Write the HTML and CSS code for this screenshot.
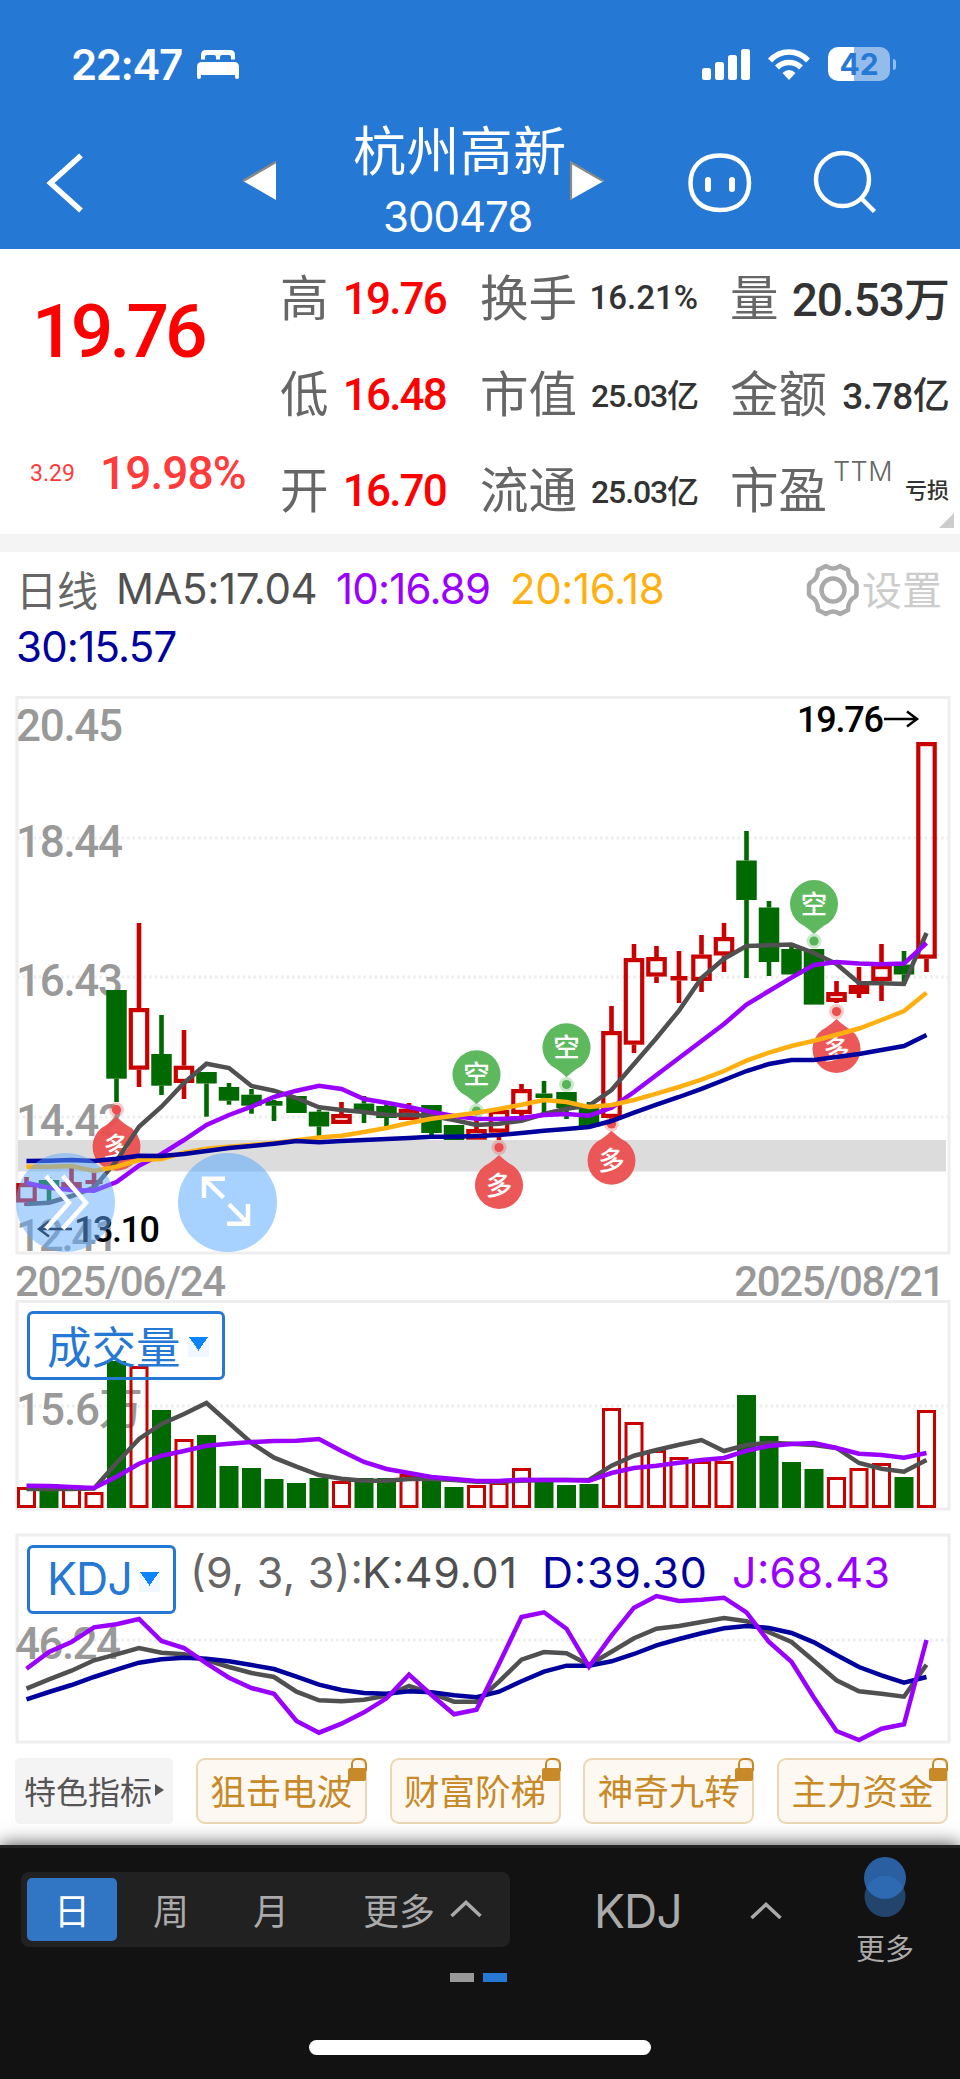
FILE: index.html
```html
<!DOCTYPE html>
<html lang="zh-CN">

<head>
  <meta charset="UTF-8">
  <meta name="viewport" content="width=device-width, initial-scale=1.0">
  <title>杭州高新 300478</title>
  <link rel="stylesheet" href="styles.css">
</head>

<body>
  <header class="header">
    <div class="status-bar">
      <span class="status-time">22:47</span>
      <svg class="icon-bed" width="42" height="29" viewBox="0 0 42 29" fill="#fff">
        <path d="M4 9.500V5q0-5 5-5h24q5 0 5 5v4.500h-4V7q0-2-2-2h-7q-2 0-2 2v2.500h-4V7q0-2-2-2h-7q-2 0-2 2v2.500z" />
        <path d="M0 17q0-5 5-5h32q5 0 5 5v10q0 2-2 2t-2-2v-2H4v2q0 2-2 2t-2-2z" />
      </svg>
      <svg class="icon-signal" width="48" height="31" viewBox="0 0 48 31" fill="#fff">
        <rect x="0" y="19" width="9" height="12" rx="2.500" />
        <rect x="13" y="13" width="9" height="18" rx="2.500" />
        <rect x="26" y="6" width="9" height="25" rx="2.500" />
        <rect x="39" y="0" width="9" height="31" rx="2.500" />
      </svg>
      <svg class="icon-wifi" width="42" height="31" viewBox="0 0 42 31">
        <g fill="none" stroke="#fff" stroke-width="5.500">
          <path d="M2 11.500Q10 3 21 3t19 8.500" />
          <path d="M9 18.500Q14 13.500 21 13.500t12 5" />
        </g>
        <path d="M14.500 24Q21 18 27.500 24L21 31z" fill="#fff" />
      </svg>
      <div class="battery"><span>42</span></div>
    </div>
    <nav class="nav">
      <svg class="nav-back" width="40" height="62" viewBox="45 152 40 62">
        <path d="M81 155.500L50.500 183 81 210.500" fill="none" stroke="#fff" stroke-width="5.500" />
      </svg>
      <svg class="nav-prev" width="36" height="40" viewBox="0 0 36 40">
        <path d="M2 20L35 1v38z" fill="#fff" />
        <path d="M2 20L35 1" stroke="#888" stroke-width="2.500" />
      </svg>
      <div class="nav-title">
        <h1>杭州高新</h1>
        <p>300478</p>
      </div>
      <svg class="nav-next" width="36" height="40" viewBox="0 0 36 40">
        <path d="M1 1l34 19L1 39z" fill="#fff" />
        <path d="M2 39V1.500l32 18.500" fill="none" stroke="#888" stroke-width="2.200" />
      </svg>
      <svg class="nav-face" width="66" height="60" viewBox="0 0 66 60">
        <path d="M33 2.500C52 2.500 62 14 62 30S52 57 33 57 3.500 46 3.500 30 14 2.500 33 2.500z" fill="none" stroke="#fff" stroke-width="4.500" />
        <path d="M21 27v9M45 27v9" stroke="#fff" stroke-width="6" stroke-linecap="round" />
      </svg>
      <svg class="nav-search" width="66" height="66" viewBox="812 149 66 66" fill="none" stroke="#fff" stroke-width="4.500">
        <circle cx="842.500" cy="179.500" r="26.500" />
        <path d="M861 198l13.500 13.500" />
      </svg>
    </nav>
  </header>

  <!-- 行情概览 -->
  <section class="quote">
    <div class="price">
      <div class="price-now">19.76</div>
      <div class="price-change"><span>3.29</span><b>19.98%</b></div>
    </div>
    <dl class="stats">
      <div><dt>高</dt><dd class="up">19.76</dd></div>
      <div><dt>换手</dt><dd class="small">16.21%</dd></div>
      <div><dt>量</dt><dd class="large">20.53万</dd></div>
      <div><dt>低</dt><dd class="up">16.48</dd></div>
      <div><dt>市值</dt><dd class="small tight">25.03亿</dd></div>
      <div><dt>金额</dt><dd class="medium">3.78亿</dd></div>
      <div><dt>开</dt><dd class="up">16.70</dd></div>
      <div><dt>流通</dt><dd class="small tight">25.03亿</dd></div>
      <div><dt>市盈<sup>TTM</sup></dt><dd class="tiny">亏损</dd></div>
    </dl>
    <i class="corner"></i>
  </section>

  <!-- 均线 -->
  <section class="legend">
    <div class="legend-row">
      <span class="legend-name">日线</span>
      <span class="ma5">MA5:17.04</span>
      <span class="ma10">10:16.89</span>
      <span class="ma20">20:16.18</span>
      <span class="settings">
        <svg width="54" height="54" viewBox="0 0 54 54" fill="none" stroke="#aaa" stroke-width="4.500" stroke-linejoin="round">
          <path d="M20 3q7 5 14 0l8 4q0 9 7.500 12.500l1 2.500v9.500l-1 2Q42 37 42 47l-8 4q-7-5-14 0l-8-4q0-10-7.500-13.500l-1.500-2V22l1.500-2.500Q12 16 12 7z" />
          <circle cx="27" cy="27" r="11.500" />
        </svg>设置
      </span>
    </div>
    <div class="legend-row ma30">30:15.57</div>
  </section>

  <!-- K线 -->
  <section class="chart">
    <svg id="kline" width="960" height="564" viewBox="0 694 960 564">
      <rect class="frame" x="17" y="697.500" width="932" height="555.500" />
      <path class="grid" d="M17 838H949M17 977H949M17 1117H949" />
      <g class="axis">
        <text x="16" y="741" textLength="107">20.45</text>
        <text x="16" y="857" textLength="107">18.44</text>
        <text x="16" y="996" textLength="107">16.43</text>
        <text x="16" y="1136" textLength="107">14.42</text>
        <text x="16" y="1251" textLength="103">12.41</text>
      </g>
      <rect x="18" y="1140" width="928" height="31.500" fill="#dcdcdc" />
      <g id="candles"></g>
      <g id="pins"></g>
      <g id="lines"></g>
      <g class="extreme">
        <text x="797" y="732" textLength="87">19.76</text>
        <path d="M884 719H917M907 711.500l10 7.500-10 7.500" />
        <text x="74" y="1242" textLength="86">13.10</text>
        <path d="M72 1229H39M49 1221.500l-10 7.500 10 7.500" />
      </g>
    </svg>
    <button class="float-btn float-next">
      <svg width="99" height="99" viewBox="16 1153 99 99"><path d="M46 1176l23 26.700-23 26M62.700 1176l23.300 26.700-23.300 26" /></svg>
    </button>
    <button class="float-btn float-expand">
      <svg width="99" height="99" viewBox="178 1153 99 99"><path d="M225 1178.700H204V1198M204 1178.700l19.500 19M227 1223.700h21V1204M248 1223.700l-19-19.500" /></svg>
    </button>
  </section>
  <div class="dates"><span>2025/06/24</span><span>2025/08/21</span></div>

  <!-- 成交量 -->
  <section class="chart">
    <svg id="volume" width="960" height="214" viewBox="0 1299 960 214">
      <rect class="frame" x="17" y="1301.500" width="932" height="207.500" />
      <path class="grid" d="M17 1406H949" />
      <g class="axis"><text x="16" y="1425" textLength="127">15.6万</text></g>
      <g id="bars"></g>
      <g id="volume-lines"></g>
    </svg>
    <button class="picker picker-volume">成交量<i></i></button>
  </section>

  <!-- KDJ -->
  <section class="chart chart-kdj">
    <svg id="kdj" width="960" height="214" viewBox="0 1532 960 214">
      <rect class="frame" x="17" y="1535" width="932" height="207" />
      <path class="grid" d="M17 1640H949" />
      <g class="axis"><text x="15" y="1659" textLength="106">46.24</text></g>
      <g class="kdj-text">
        <text x="190" y="1588" textLength="173" fill="#666">(9, 3, 3):</text>
        <text x="362" y="1588" textLength="155" fill="#505050">K:49.01</text>
        <text x="542" y="1588" textLength="165" fill="#00009c">D:39.30</text>
        <text x="732" y="1588" textLength="158" fill="#90f">J:68.43</text>
      </g>
      <g id="kdj-lines"></g>
    </svg>
    <button class="picker picker-kdj">KDJ<i></i></button>
  </section>

  <div class="chips">
    <span class="chip-more">特色指标<i></i></span>
    <span class="chip">狙击电波<i class="lock"></i></span>
    <span class="chip">财富阶梯<i class="lock"></i></span>
    <span class="chip">神奇九转<i class="lock"></i></span>
    <span class="chip">主力资金<i class="lock"></i></span>
  </div>

  <footer class="toolbar">
    <div class="toolbar-row">
      <div class="periods">
        <span class="active">日</span>
        <span>周</span>
        <span>月</span>
        <span class="more">更多<svg width="32" height="18" viewBox="0 0 32 18"><path d="M1.500 16L16 2.500 30.500 16" /></svg></span>
      </div>
      <div class="indicator">KDJ<svg width="32" height="18" viewBox="0 0 32 18"><path d="M1.500 16L16 2.500 30.500 16" /></svg></div>
      <div class="menu">
        <svg width="44" height="62" viewBox="0 0 44 62">
          <circle cx="22" cy="40.500" r="20.500" fill="#23446d" />
          <circle cx="22" cy="22" r="21" fill="#2a60a2" />
          <path d="M3.500 31.500a20.500 20.500 0 0 1 37 0 21 21 0 0 1-37 0z" fill="#2d6ab2" />
        </svg>
        更多
      </div>
    </div>
    <div class="pager"><i></i><i class="current"></i></div>
    <div class="home-bar"></div>
  </footer>

  <script src="chart.js"></script>
</body>

</html>
```
FILE: styles.css
```css
:root {
  --blue: #2678d5;
  --red: #c80000;
  --green: #006900;
  --cjk: "Noto Sans CJK SC", sans-serif;
  --num: Roboto, "Noto Sans CJK SC", sans-serif;
  --text: Inter, "Noto Sans CJK SC", sans-serif;
}

* {
  box-sizing: border-box;
}

body {
  margin: 0;
  width: 960px;
  height: 2079px;
  overflow: hidden;
  background: #fff;
  font-family: var(--text);
}

h1,
p,
dl,
dt,
dd {
  margin: 0;
  font-weight: 400;
}

svg {
  display: block;
  flex: none;
}

button {
  padding: 0;
  border: none;
  background: none;
}

/* header */
.header {
  height: 249px;
  background: var(--blue);
  color: #fff;
}

.status-bar {
  display: flex;
  align-items: center;
  height: 128px;
  padding: 0 65px 0 71px;
}

.status-time {
  width: 126px;
  font-size: 42px;
  font-weight: 600;
  letter-spacing: -1.4px;
}

.icon-signal {
  margin-left: auto;
}

.icon-wifi {
  margin: 0 18px;
}

.battery {
  position: relative;
  width: 62px;
  height: 34px;
  margin-right: 5px;
  border-radius: 10px;
  background: linear-gradient(90deg, #fff 26px, #93bceb 26px);
  color: var(--blue);
  font-size: 30px;
  font-weight: 700;
  line-height: 34px;
  text-align: center;
}

.battery::after {
  content: "";
  position: absolute;
  right: -6px;
  top: 12px;
  width: 3px;
  height: 11px;
  border-radius: 0 4px 4px 0;
  background: #93bceb;
}

.nav {
  display: flex;
  align-items: flex-start;
  height: 121px;
  padding-left: 45px;
}

.nav-back {
  margin-top: 24px;
}

.nav-prev {
  margin: 33px 0 0 156px;
}

.nav-title {
  width: 292px;
  margin-top: -13px;
  padding-left: 76px;
}

.nav-title h1 {
  font-family: var(--cjk);
  font-size: 53px;
  font-weight: 400;
  line-height: 66px;
  letter-spacing: 0.4px;
  white-space: nowrap;
}

.nav-title p {
  padding: 4px 0 0 30px;
  font-size: 42px;
  line-height: 64px;
  letter-spacing: -1px;
}

.nav-next {
  margin-top: 33px;
}

.nav-face {
  margin: 25px 0 0 82px;
}

.nav-search {
  margin: 21px 0 0 59px;
}

/* quote */
.quote {
  position: relative;
  display: flex;
  height: 303px;
  border-bottom: 18px solid #f4f4f4;
}

.price {
  width: 280px;
  color: #ff3b3b;
  font-family: var(--num);
}

.price-now {
  padding: 38px 0 0 32px;
  color: #f00;
  font-size: 75px;
  font-weight: 500;
  line-height: 88px;
  letter-spacing: -3.9px;
}

.price-change {
  display: flex;
  align-items: center;
  height: 60px;
  margin-top: 68px;
  padding-left: 30px;
  font-size: 23px;
}

.price-change span {
  width: 70px;
}

.price-change b {
  font-size: 46px;
  font-weight: 500;
  letter-spacing: -0.9px;
}

.stats {
  display: grid;
  grid-template-columns: 168px 218px 219px;
  grid-template-rows: repeat(3, 96px);
  column-gap: 32px;
}

.stats div {
  display: flex;
  align-items: center;
  justify-content: space-between;
  height: 96px;
  white-space: nowrap;
}

.stats dt {
  display: flex;
  margin-top: -5px;
  color: #666;
  font-family: var(--cjk);
  font-size: 48.5px;
}

.stats sup {
  margin: 5px 0 0 6px;
  font-family: var(--text);
  font-size: 27px;
  font-weight: 300;
  line-height: 30px;
  letter-spacing: 0.4px;
}

.stats dd {
  color: #333;
  font-family: var(--num);
  font-weight: 500;
}

.stats .up {
  padding: 3px 2px 0 0;
  color: #f00;
  font-size: 44px;
  letter-spacing: -1.8px;
}

.stats .small {
  font-size: 33px;
}

.stats .tight {
  font-size: 32px;
  letter-spacing: -1.1px;
}

.stats .medium {
  font-size: 37px;
  letter-spacing: -0.7px;
}

.stats .large {
  padding-bottom: 3px;
  font-size: 46px;
  letter-spacing: -1px;
}

.stats .tiny {
  padding-bottom: 2px;
  font-size: 22px;
}

.corner {
  position: absolute;
  right: 6px;
  bottom: 6px;
  border-bottom: 15px solid #ccc;
  border-left: 15px solid transparent;
}

/* legend */
.legend {
  height: 142px;
  padding: 7px 16px 0;
  font-size: 42px;
  letter-spacing: -0.8px;
}

.legend-row {
  display: flex;
  align-items: center;
  height: 58px;
  white-space: nowrap;
}

.legend-name {
  width: 100px;
  color: #666;
  font-family: var(--cjk);
  font-size: 41px;
  letter-spacing: 0;
}

.ma5 {
  width: 220px;
  color: #505050;
  letter-spacing: -0.4px;
}

.ma10 {
  width: 174px;
  color: #90f;
}

.ma20 {
  color: #ffb010;
  letter-spacing: -0.4px;
}

.ma30 {
  color: #00009c;
}

.settings {
  display: flex;
  align-items: center;
  gap: 2px;
  margin-left: auto;
  padding-right: 2px;
  color: #ccc;
  font-family: var(--cjk);
  font-size: 40px;
  letter-spacing: 0;
}

.settings svg {
  margin-top: 4px;
}

/* charts */
.chart {
  position: relative;
}

.chart-kdj {
  margin-top: 19px;
}

.frame {
  fill: none;
  stroke: #eee;
  stroke-width: 3;
}

.grid {
  stroke: #eee;
  stroke-width: 3;
  stroke-dasharray: 2.7 2.8;
}

.axis {
  fill: #999;
  font-family: var(--num);
  font-size: 44px;
  font-weight: 500;
}

.extreme {
  font-family: var(--num);
  font-size: 36px;
  font-weight: 500;
}

.extreme path {
  fill: none;
  stroke: #000;
  stroke-width: 2.5;
}

.kdj-text {
  font-size: 43px;
}

.up-candle {
  fill: none;
  stroke: var(--red);
  stroke-width: 4.2;
}

.down-candle {
  fill: var(--green);
}

.up-bar {
  fill: none;
  stroke: var(--red);
  stroke-width: 3;
}

.line {
  fill: none;
  stroke-width: 4.5;
}

.pin text {
  fill: #fff;
  font-family: var(--cjk);
  font-size: 26.5px;
  font-weight: 500;
  text-anchor: middle;
}

.float-btn {
  position: absolute;
  top: 459px;
  width: 99px;
  height: 99px;
  border-radius: 50%;
  background: rgba(80, 165, 255, 0.5);
}

.float-btn path {
  fill: none;
  stroke: #fff;
  stroke-width: 4.5;
}

.float-next {
  left: 16px;
  background: rgba(96, 172, 255, 0.5);
}

.float-expand {
  left: 178px;
}

.picker {
  position: absolute;
  left: 27px;
  display: flex;
  align-items: center;
  height: 69px;
  padding: 0 0 3px 17px;
  border: 3px solid var(--blue);
  border-radius: 6px;
  color: var(--blue);
  font-family: var(--text);
  font-size: 44.5px;
}

.picker i {
  width: 21px;
  height: 20px;
  margin: 6px 0 0 7px;
  background: conic-gradient(from -35deg at 50% 80%, #0a84ff 70deg, transparent 0) 0 0 / 21px 17px no-repeat, #f0f7ff;
}

.picker-volume {
  top: 12px;
  width: 198px;
}

.picker-kdj {
  top: 13px;
  width: 149px;
  padding-bottom: 1px;
  letter-spacing: -0.8px;
}

.dates {
  display: flex;
  justify-content: space-between;
  height: 41px;
  padding: 1px 16px 0 15px;
  color: #999;
  font-family: var(--num);
  font-size: 42px;
  font-weight: 500;
  line-height: 46px;
  letter-spacing: -1.4px;
}

/* chips */
.chips {
  display: flex;
  justify-content: space-between;
  padding: 12px 12px 0 15px;
  font-family: var(--cjk);
}

.chip-more,
.chip {
  position: relative;
  display: flex;
  align-items: center;
  justify-content: center;
  height: 66px;
  padding-bottom: 3px;
  border-radius: 5px;
  white-space: nowrap;
}

.chip-more {
  width: 158px;
  background: #f4f4f4;
  color: #555;
  font-size: 32px;
}

.chip-more i {
  margin-left: 3px;
  border: 6px solid transparent;
  border-left: 9px solid #555;
  border-right: 0;
}

.chip {
  width: 171px;
  border: 2px solid #ecd7b4;
  border-radius: 9px;
  background: #fdf9f2;
  color: #c88a28;
  font-size: 35.5px;
}

.lock {
  position: absolute;
  top: 8px;
  right: -1px;
  width: 18px;
  height: 13px;
  border-radius: 2px;
  background: #c88a28;
}

.lock::before {
  content: "";
  position: absolute;
  left: 3px;
  top: -10px;
  width: 12px;
  height: 11px;
  border: 2.5px solid #c88a28;
  border-bottom: none;
  border-radius: 6px 6px 0 0;
}

/* bottom toolbar */
.toolbar {
  position: relative;
  height: 234px;
  margin-top: 21px;
  border-top: 3px solid #222;
  background: #121212;
  box-shadow: 0 0 18px rgba(0, 0, 0, 0.75);
  color: #aaa;
  font-family: var(--cjk);
  font-size: 36px;
}

.toolbar-row {
  display: flex;
  height: 125px;
  padding-left: 21px;
}

.periods path,
.indicator path {
  fill: none;
  stroke: #aaa;
  stroke-width: 3.5;
}

.periods {
  display: flex;
  align-items: center;
  width: 489px;
  height: 75px;
  margin-top: 24px;
  padding: 0 6px;
  border-radius: 8px;
  background: #212121;
}

.periods span {
  width: 100px;
  padding-bottom: 2px;
  text-align: center;
}

.periods .active {
  width: 90px;
  height: 63px;
  margin-right: 4px;
  border-radius: 5px;
  background: #3076c4;
  color: #fff;
  line-height: 62px;
}

.periods .more {
  display: flex;
  align-items: center;
  gap: 15px;
  width: auto;
  margin-left: 42px;
}

.indicator {
  display: flex;
  align-items: center;
  justify-content: space-between;
  width: 188px;
  height: 77px;
  margin: 24px 0 0 84px;
  font-family: var(--text);
  font-size: 46px;
  letter-spacing: -0.8px;
}

.menu {
  display: flex;
  flex-direction: column;
  align-items: center;
  margin: 8px 0 0 74px;
  font-size: 29px;
  line-height: 58px;
}

.pager {
  display: flex;
  gap: 9px;
  padding-left: 450px;
}

.pager i {
  width: 24px;
  height: 9px;
  background: #999;
}

.pager .current {
  background: var(--blue);
}

.home-bar {
  width: 342px;
  height: 15px;
  margin: 58px auto 0;
  border-radius: 8px;
  background: #fff;
}
```
FILE: chart.js
```js
const NS = 'http://www.w3.org/2000/svg';
const FIRST = 26.5;
const STEP = 22.5;
const xAt = i => FIRST + STEP * i;

function add(parent, tag, attrs, text) {
  const el = document.createElementNS(NS, tag);
  for (const key in attrs) el.setAttribute(key, attrs[key]);
  if (text) el.textContent = text;
  parent.appendChild(el);
  return el;
}

// [direction, body top, body bottom, high, low]
const candles = [
  ['r', 1183, 1202.5, 1177, 1206], ['g', 1180, 1188.7, 1177, 1201], ['r', 1182, 1188, 1168, 1189], ['r', 1180, 1184, 1170, 1187],
  ['g', 990, 1078.7, 990, 1102], ['r', 1008, 1069.7, 923, 1087], ['g', 1054, 1085.7, 1015, 1095], ['r', 1065.7, 1083, 1030, 1099],
  ['g', 1072, 1083.5, 1072, 1116.7], ['g', 1087, 1100.7, 1083, 1104.7], ['g', 1094.7, 1105.7, 1089, 1113.7], ['g', 1101, 1105.7, 1100, 1121],
  ['g', 1096, 1113, 1096, 1113], ['g', 1111.7, 1126.5, 1109.7, 1136], ['r', 1114, 1124, 1102, 1124], ['g', 1103.5, 1111, 1096, 1123],
  ['g', 1106, 1118, 1104, 1126], ['r', 1108.7, 1120, 1103, 1120], ['g', 1105, 1133, 1105, 1136], ['g', 1125, 1140, 1125, 1140],
  ['r', 1129, 1139.7, 1119, 1139], ['r', 1110, 1132.7, 1110, 1140], ['r', 1089, 1114, 1084, 1116], ['g', 1093.5, 1098, 1081, 1113],
  ['g', 1092, 1108, 1092, 1119], ['g', 1107.7, 1126.7, 1102, 1126], ['r', 1031, 1118, 1006, 1125], ['r', 958, 1044.7, 944, 1053],
  ['r', 957, 976.6, 946, 983], ['r', 976, 980.5, 951, 1003], ['r', 954.5, 981, 935, 992], ['r', 937, 955.5, 923, 972],
  ['g', 860.5, 900, 831, 978], ['g', 907.5, 962, 901, 976], ['g', 949, 974.5, 947, 974], ['g', 949, 1004.6, 949, 1004],
  ['r', 992, 1002, 981, 1003], ['r', 985, 994, 967, 998], ['r', 965, 981, 944, 1001], ['g', 964.6, 974.5, 951, 984],
  ['r', 742, 958.7, 742, 972]
];

const candleLayer = document.getElementById('candles');
candles.forEach(([dir, top, bottom, high, low], i) => {
  const x = xAt(i);
  const color = dir === 'r' ? '#c80000' : '#006900';
  const doji = bottom - top < 5;
  const w = doji ? 17 : 20.5;
  // wicks stop at the body, rising candles are hollow
  if (high < top) add(candleLayer, 'rect', { x: x - 2.3, y: high, width: 4.6, height: top - high, fill: color });
  if (low > bottom) add(candleLayer, 'rect', { x: x - 2.3, y: bottom, width: 4.6, height: low - bottom, fill: color });
  if (dir === 'r' && bottom - top > 9.5) {
    add(candleLayer, 'rect', { class: 'up-candle', x: x - 8.2, y: top + 2.1, width: 16.4, height: bottom - top - 4.2 });
  } else {
    add(candleLayer, 'rect', { x: x - w / 2, y: top, width: w, height: bottom - top, fill: color });
  }
});

// [index, label, circle centre, dot centre]
const pins = [
  [4, '多', 1146.7, 1109.7], [20, '空', 1074.3, 1111], [21, '多', 1185, 1147.5], [24, '空', 1047.3, 1084.5],
  [26, '多', 1160.7, 1124], [35, '空', 904, 941], [36, '多', 1049, 1011.6]
];

const pinLayer = document.getElementById('pins');
pins.forEach(([i, label, cy, dot]) => {
  const x = xAt(i);
  const fill = label === '空' ? '#55b455' : '#eb4e4e';
  const dir = label === '空' ? 1 : -1;
  const g = add(pinLayer, 'g', { class: 'pin' });
  add(g, 'circle', { cx: x, cy: dot, r: 7.5, fill, opacity: 0.3 });
  add(g, 'circle', { cx: x, cy: dot, r: 4.6, fill });
  add(g, 'path', {
    d: `M${x} ${cy + 30 * dir}Q${x + 4} ${cy + 26 * dir} ${x + 10} ${cy + 21.8 * dir}A24 24 0 1 ${dir > 0 ? 0 : 1} ${x - 10} ${cy + 21.8 * dir}Q${x - 4} ${cy + 26 * dir} ${x} ${cy + 30 * dir}z`,
    fill,
    opacity: 0.95
  });
  add(g, 'text', { x, y: cy + 9.5 }, label);
});

function drawLine(id, color, values) {
  const points = values.map((y, i) => xAt(i) + ',' + y).join(' ');
  add(document.getElementById(id), 'polyline', { class: 'line', stroke: color, points });
}

drawLine('lines', '#505050', [1204, 1202.7, 1196, 1187.7, 1161, 1126.7, 1106.7, 1083, 1063.7, 1068, 1086, 1090.7, 1098, 1107.3, 1110, 1112, 1114.7, 1115, 1116, 1120, 1125, 1123.7, 1120.7, 1114, 1108.7, 1105.7, 1090, 1064, 1038, 1010.6, 978, 958.7, 946, 945.3, 944.6, 953, 964, 983, 983.2, 984, 933]);
drawLine('lines', '#9900ff', [1183, 1187.7, 1190, 1190.7, 1182, 1165.7, 1154, 1140, 1125, 1115, 1106.7, 1097, 1090.7, 1085.7, 1089, 1099, 1102.7, 1107, 1112, 1116, 1118.7, 1119, 1118, 1115, 1114, 1115.7, 1107.7, 1092, 1075, 1058, 1041, 1024, 1004.6, 991, 977.6, 965, 962, 963.6, 964.3, 963.6, 943]);
drawLine('lines', '#ffb010', [1166.7, 1166.7, 1166, 1171, 1166.7, 1160, 1159, 1152.7, 1148.7, 1146.7, 1145, 1143, 1140.3, 1137.5, 1135.7, 1132, 1128, 1123, 1118.7, 1115.7, 1112.7, 1109, 1104.7, 1100, 1102, 1107, 1105, 1100, 1093.7, 1087, 1079.7, 1071, 1060.7, 1052.7, 1046, 1040.7, 1034.8, 1028.5, 1020, 1011, 992.7]);
drawLine('lines', '#00009c', [1161, 1160.7, 1160, 1161, 1158.7, 1155.7, 1156, 1154, 1151, 1148, 1146, 1143.7, 1141, 1142.3, 1141, 1140, 1139, 1138, 1136.7, 1136.7, 1136, 1135, 1133, 1130.7, 1129, 1127, 1121, 1112.7, 1104.6, 1097, 1088.8, 1080, 1071, 1064, 1060, 1060, 1057, 1054, 1050, 1046, 1035]);

// [direction, bar top]
const volumes = [
  ['r', 1487], ['g', 1484], ['r', 1487.5], ['r', 1492], ['g', 1361], ['r', 1366], ['g', 1410], ['r', 1439], ['g', 1435], ['g', 1466],
  ['g', 1468], ['g', 1479], ['g', 1483], ['g', 1478], ['r', 1481], ['g', 1478], ['g', 1478], ['r', 1474], ['g', 1479], ['g', 1487],
  ['r', 1485], ['r', 1482], ['r', 1468], ['g', 1481.5], ['g', 1485], ['g', 1484], ['r', 1408], ['r', 1422], ['r', 1450], ['r', 1457],
  ['r', 1461], ['r', 1461], ['g', 1395], ['g', 1436], ['g', 1462], ['g', 1469], ['r', 1477], ['r', 1468], ['r', 1463], ['g', 1477],
  ['r', 1410]
];

const barLayer = document.getElementById('bars');
volumes.forEach(([dir, top], i) => {
  const x = xAt(i);
  if (dir === 'r') {
    add(barLayer, 'rect', { class: 'up-bar', x: x - 8, y: top + 1.5, width: 16, height: 1508 - top - 3 });
  } else {
    add(barLayer, 'rect', { class: 'down-candle', x: x - 9.5, y: top, width: 19, height: 1508 - top });
  }
});

drawLine('volume-lines', '#505050', [1489, 1489, 1489, 1488.5, 1463, 1439, 1424, 1414, 1403, 1423, 1443, 1457.7, 1466.7, 1475, 1478.7, 1480.7, 1480.7, 1479, 1479, 1480, 1481.7, 1481.7, 1480.7, 1480, 1480, 1480, 1465.7, 1455.7, 1450, 1444.7, 1440, 1451, 1445, 1442.7, 1443.7, 1445, 1448, 1463, 1468.7, 1471.7, 1460]);
drawLine('volume-lines', '#9900ff', [1485.7, 1486, 1487, 1488, 1476.7, 1463.7, 1455.7, 1451, 1445.7, 1443.7, 1442, 1441, 1440.7, 1439, 1451, 1462, 1469, 1473, 1477, 1479, 1481, 1481, 1479.7, 1480, 1480, 1480.7, 1473, 1468, 1465.7, 1462.7, 1460, 1458, 1450.7, 1446, 1444, 1443, 1448, 1453.7, 1455, 1457.7, 1453]);

drawLine('kdj-lines', '#505050', [1688.7, 1679.3, 1670.7, 1660.3, 1654.3, 1648, 1652.7, 1654.3, 1660, 1667, 1673, 1677, 1691.7, 1700.3, 1701.3, 1699.7, 1695.7, 1686, 1693.3, 1701.7, 1701.7, 1681.7, 1659.7, 1652, 1653.3, 1665, 1651.7, 1638.3, 1628.7, 1626, 1622, 1618, 1621.3, 1632.3, 1642, 1661, 1680.3, 1691.3, 1693.7, 1696.7, 1664.7]);
drawLine('kdj-lines', '#00009c', [1699.3, 1692, 1685, 1677, 1669.7, 1662.7, 1659.3, 1657.7, 1658.7, 1661.3, 1665, 1669, 1676.7, 1684.7, 1690, 1693, 1693.7, 1691.3, 1692.3, 1695.3, 1697.3, 1691.7, 1681.3, 1671.7, 1665.7, 1665.7, 1661.3, 1654, 1645.3, 1639, 1633.3, 1628.3, 1626, 1628, 1633, 1642.3, 1655, 1667, 1675.3, 1682.7, 1677]);
drawLine('kdj-lines', '#9900ff', [1668.7, 1652, 1642, 1627.3, 1624.3, 1619, 1641, 1648, 1663.3, 1677.7, 1688, 1693.7, 1721, 1732.7, 1723.7, 1712.3, 1698.3, 1674.7, 1695, 1714.3, 1709.7, 1664, 1617, 1612.3, 1628.7, 1666.7, 1635.7, 1607.7, 1596, 1601, 1599.7, 1597.7, 1612.3, 1642, 1661.7, 1697.7, 1731, 1740, 1728.7, 1724.3, 1640]);
```
